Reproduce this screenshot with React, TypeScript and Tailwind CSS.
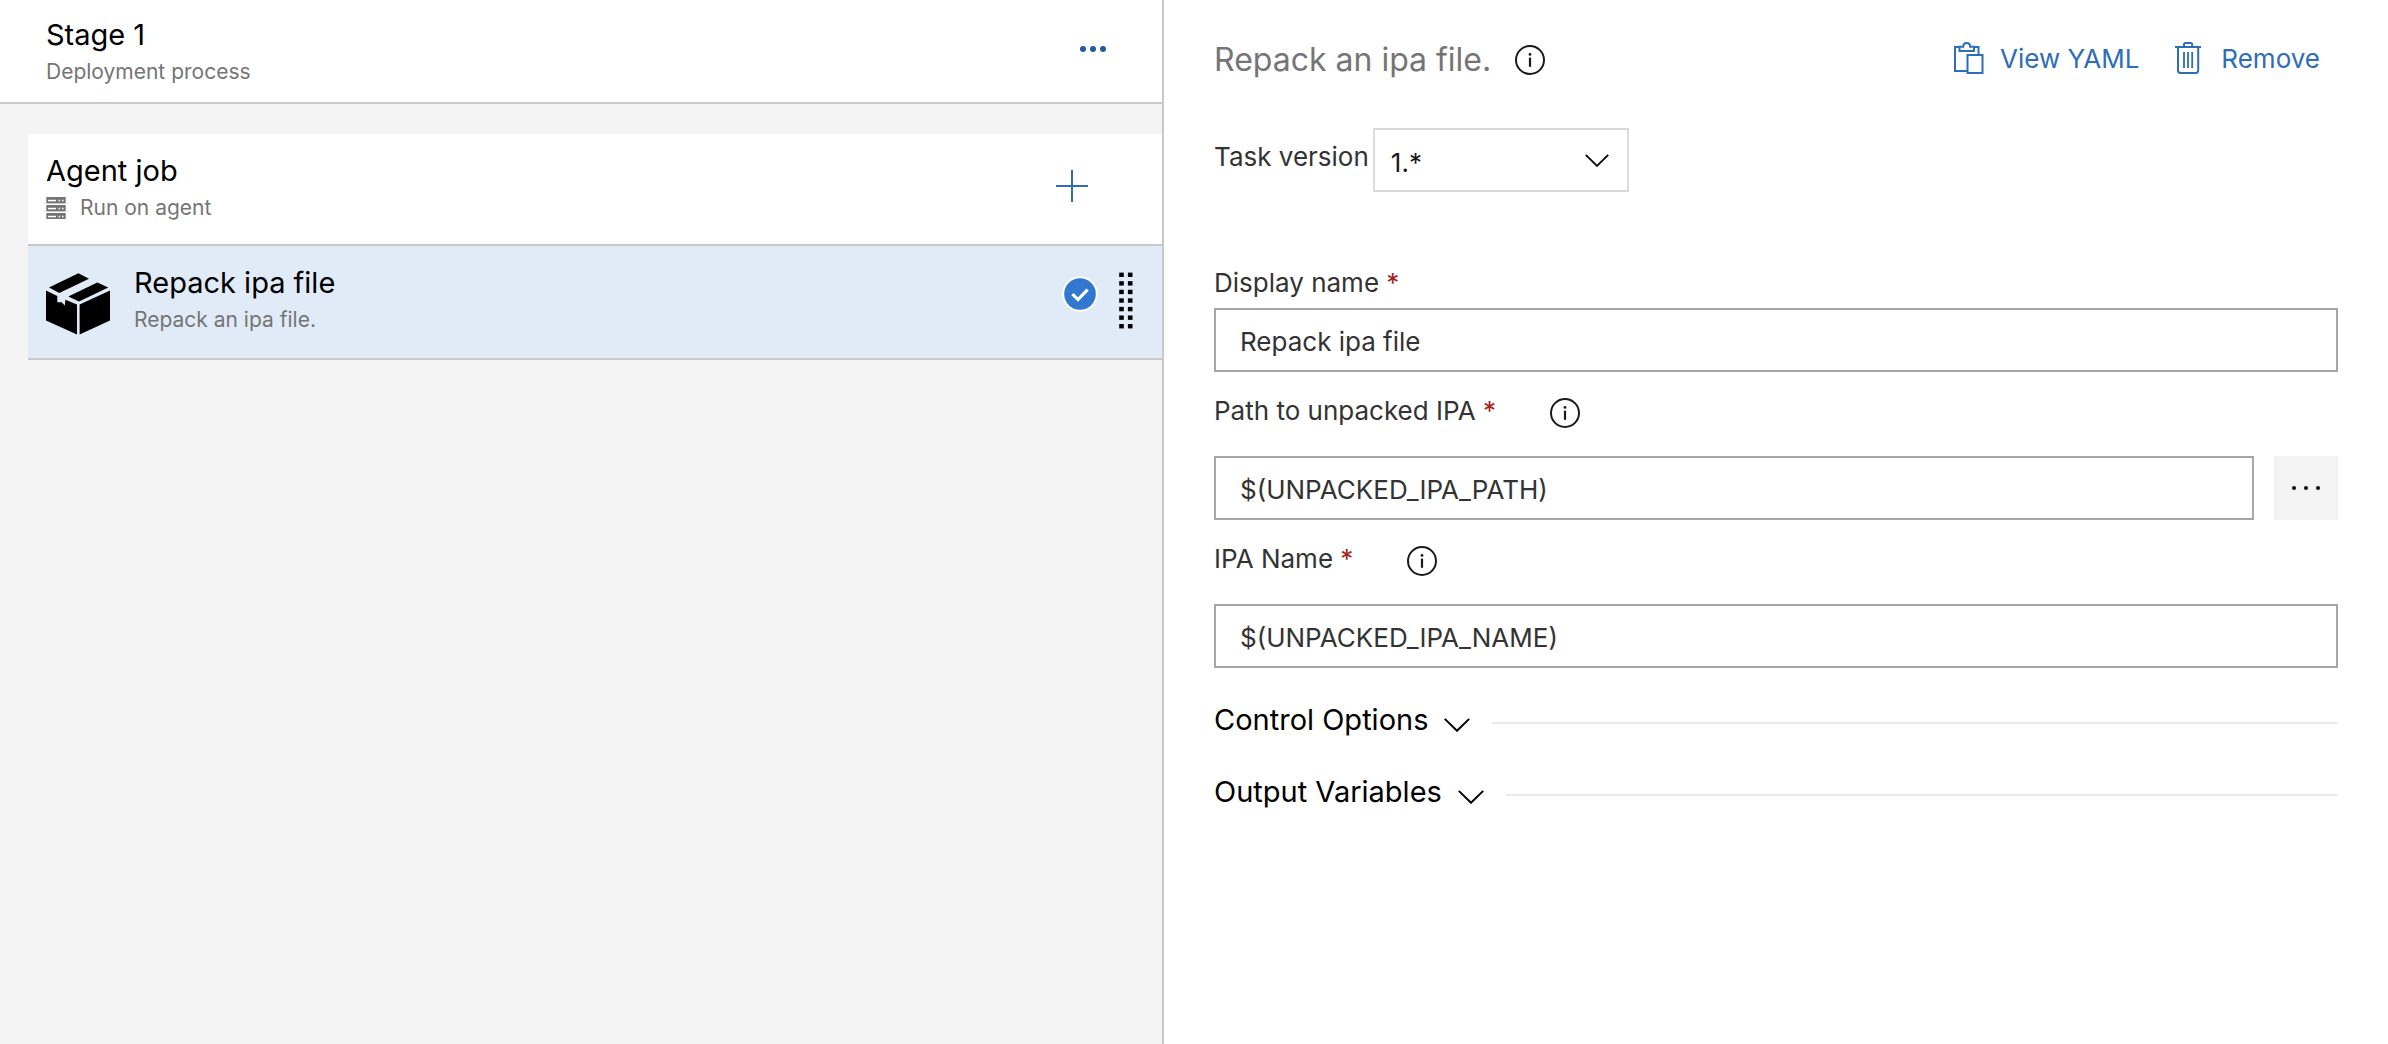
import React, { useState } from "react";

function InfoIcon() {
  return (
    <svg viewBox="0 0 30 30" className="size-[30px] shrink-0" fill="none" aria-hidden="true">
      <circle cx="15" cy="15" r="14" stroke="#1a1a1a" strokeWidth="2" />
      <circle cx="15" cy="9.4" r="1.4" fill="#1a1a1a" />
      <path d="M15 12.6V21.8" stroke="#1a1a1a" strokeWidth="2.2" />
    </svg>
  );
}

function InfoButton({ label }: { label: string }) {
  return (
    <button type="button" aria-label={label} className="flex shrink-0">
      <InfoIcon />
    </button>
  );
}

function ServerIcon() {
  return (
    <svg viewBox="0 0 20 22" className="h-[22px] w-5 shrink-0" aria-hidden="true">
      {[0, 8, 16].map((y) => (
        <g key={y}>
          <rect x="0.3" y={y} width="19.4" height="6.4" fill="#757575" />
          <rect x="2" y={y + 2.8} width="8" height="1.5" fill="#fff" />
          <rect x="12.6" y={y + 2.8} width="1.5" height="1.5" fill="#fff" />
          <rect x="16" y={y + 2.8} width="1.5" height="1.5" fill="#fff" />
        </g>
      ))}
    </svg>
  );
}

function BoxIcon() {
  return (
    <svg viewBox="0 0 64 64" className="size-16 shrink-0" aria-hidden="true">
      <path d="M3 15.4L32.4 1.3L43 6.7L13.3 21Z" />
      <path d="M22.3 24.4L51.3 10.4L62.3 15.4L33 29.6Z" />
      <path d="M0 18.4L11.3 24V30.2H15.6L18.8 33.6L19.4 27.8L31 32.6V62.6L0 48.4Z" />
      <path d="M33.6 32.6L64 18.4V48.4L33.6 62.6Z" />
    </svg>
  );
}

function ClipboardIcon() {
  return (
    <svg viewBox="0 0 30 32" className="h-8 w-[30px] shrink-0" fill="none" stroke="currentColor" strokeWidth="2" aria-hidden="true">
      <path d="M5.5 5H1V29H13.5M19.5 5H24.5V12" />
      <path d="M5.5 4.8V9H20V4.8H16.2C16.2 2.4 14.8 1 12.7 1C10.6 1 9.2 2.4 9.2 4.8Z" />
      <path d="M13.5 13H28.5V31H13.5Z" />
    </svg>
  );
}

function TrashIcon() {
  return (
    <svg viewBox="0 0 26 32" className="h-8 w-[26px] shrink-0" fill="none" stroke="currentColor" strokeWidth="2" aria-hidden="true">
      <path d="M0 5H26M9 5V2.6Q9 1 10.6 1H15.6Q17.2 1 17.2 2.6V5" />
      <path d="M3 5V28.6Q3 31 5.4 31H20.8Q23.2 31 23.2 28.6V5" />
      <path d="M9 10V26M13 10V26M17.2 10V26" strokeWidth="1.8" />
    </svg>
  );
}

function Chevron({ className }: { className: string }) {
  return (
    <svg viewBox="0 0 26 14" className={className} fill="none" stroke="#000" strokeWidth="2" aria-hidden="true">
      <path d="M0.8 0.9L13 12.8L25.2 0.9" />
    </svg>
  );
}

function FieldLabel({ htmlFor, children }: { htmlFor: string; children: React.ReactNode }) {
  return (
    <label htmlFor={htmlFor} className="whitespace-nowrap leading-[34px]">
      {children} <span className="text-[#a3241c]">*</span>
    </label>
  );
}

function TextField({ id, initial }: { id: string; initial: string }) {
  const [value, setValue] = useState(initial);
  return (
    <input
      id={id}
      type="text"
      required
      value={value}
      onChange={(e) => setValue(e.target.value)}
      className="h-16 w-full min-w-0 flex-1 border-2 border-[#a6a6a6] bg-white px-6 pt-0.5 shadow-none outline-none"
    />
  );
}

function Section({ title }: { title: string }) {
  return (
    <div className="flex h-[72px] items-center">
      <button type="button" className="flex items-center gap-4 text-black">
        <span className="text-[29px] leading-9">{title}</span>
        <Chevron className="mt-2.5 h-[14px] w-[26px]" />
      </button>
      <div className="ml-[22px] mt-1.5 h-0.5 flex-1 bg-[#eaeaea]" />
    </div>
  );
}

function StagePane() {
  return (
    <aside className="border-r-2 border-[#c8c8c8] bg-[#f3f3f3]">
      <header className="flex h-[104px] items-start justify-between border-b-2 border-[#c8c8c8] bg-white pl-[46px] pr-14">
        <div className="pt-4">
          <h1 className="text-[29px] leading-[38px] text-black">Stage 1</h1>
          <p className="text-[21px] leading-9 text-[#757575]">Deployment process</p>
        </div>
        <button type="button" aria-label="More actions" className="mt-[46px] flex gap-1">
          <span className="size-1.5 rounded-full bg-[#215a9e]" />
          <span className="size-1.5 rounded-full bg-[#215a9e]" />
          <span className="size-1.5 rounded-full bg-[#215a9e]" />
        </button>
      </header>

      <div className="ml-7 mt-[30px]">
        <div className="flex h-28 items-start justify-between border-b-2 border-[#c8c8c8] bg-white pl-[18px] pr-[74px]">
          <div className="pt-[18px]">
            <h2 className="text-[29px] leading-[38px] text-black">Agent job</h2>
            <p className="flex items-center gap-[14px] text-[21px] leading-9 text-[#757575]">
              <ServerIcon />
              Run on agent
            </p>
          </div>
          <button type="button" aria-label="Add a task to Agent job" className="mt-9">
            <svg viewBox="0 0 32 32" className="size-8" stroke="#2e6db8" strokeWidth="2" aria-hidden="true">
              <path d="M16 0V32M0 16H32" />
            </svg>
          </button>
        </div>

        <div className="flex h-[114px] items-start border-b-2 border-[#c8c8c8] bg-[#e1ebf7] pl-[18px] pr-[29px]">
          <div className="pt-[26px]">
            <BoxIcon />
          </div>
          <div className="ml-6 flex-1 pt-[18px]">
            <h3 className="text-[29px] leading-[38px] text-black">Repack ipa file</h3>
            <p className="text-[21px] leading-9 text-[#757575]">Repack an ipa file.</p>
          </div>
          <svg viewBox="0 0 36 36" className="mt-[30px] size-9" fill="none" aria-hidden="true">
            <circle cx="18" cy="18" r="17.8" fill="#fff" />
            <circle cx="18" cy="18" r="15.8" fill="#3278d1" />
            <path d="M10.4 18.2L16 23.6L25.6 13.6" stroke="#fff" strokeWidth="3.2" />
          </svg>
          <svg viewBox="0 0 14 57" className="ml-[21px] mt-[26px] h-[57px] w-[14px]" aria-hidden="true">
            {[0, 1, 2, 3, 4, 5, 6].map((i) => (
              <g key={i}>
                <rect x="0.2" y={0.6 + i * 8.57} width="4.6" height="4.4" />
                <rect x="8.9" y={0.6 + i * 8.57} width="4.6" height="4.4" />
              </g>
            ))}
          </svg>
        </div>
      </div>
    </aside>
  );
}

function TaskPane() {
  return (
    <main className="bg-white px-[50px] pt-9 text-[26px] text-[#333]">
      <header className="flex items-start justify-between">
        <div className="flex items-center gap-6">
          <h2 className="text-[32px] leading-12 text-[#757575]">Repack an ipa file.</h2>
          <InfoButton label="About this task" />
        </div>
        <div className="flex gap-9 pr-[18px] pt-1.5 leading-[34px] text-[#2e6db8]">
          <button type="button" className="flex items-start gap-4">
            <ClipboardIcon />
            View YAML
          </button>
          <button type="button" className="flex items-start gap-5">
            <TrashIcon />
            Remove
          </button>
        </div>
      </header>

      <div className="mt-11 flex items-start gap-1">
        <label htmlFor="task-version" className="pt-3 leading-[34px]">
          Task version
        </label>
        <div className="relative w-64">
          <select
            id="task-version"
            defaultValue="1"
            className="h-16 w-full appearance-none border-2 border-[#dadada] bg-white px-4 pt-1 text-[#1a1a1a] outline-none"
          >
            <option value="1">1.*</option>
          </select>
          <Chevron className="pointer-events-none absolute right-5 top-[26px] h-[13px] w-6" />
        </div>
      </div>

      <div className="mt-[74px]">
        <div className="flex h-[42px]">
          <FieldLabel htmlFor="display-name">Display name</FieldLabel>
        </div>
        <div className="flex">
          <TextField id="display-name" initial="Repack ipa file" />
        </div>
      </div>

      <div className="mt-[22px]">
        <div className="flex h-[62px] gap-[54px]">
          <FieldLabel htmlFor="ipa-path">Path to unpacked IPA</FieldLabel>
          <div className="pt-1">
            <InfoButton label="About Path to unpacked IPA" />
          </div>
        </div>
        <div className="flex gap-5">
          <TextField id="ipa-path" initial="$(UNPACKED_IPA_PATH)" />
          <button type="button" aria-label="Browse" className="flex size-16 items-center justify-center gap-2 bg-[#f3f3f3]">
            <span className="size-1 rounded-full bg-black" />
            <span className="size-1 rounded-full bg-black" />
            <span className="size-1 rounded-full bg-black" />
          </button>
        </div>
      </div>

      <div className="mt-[22px]">
        <div className="flex h-[62px] gap-[54px]">
          <FieldLabel htmlFor="ipa-name">IPA Name</FieldLabel>
          <div className="pt-1">
            <InfoButton label="About IPA Name" />
          </div>
        </div>
        <div className="flex">
          <TextField id="ipa-name" initial="$(UNPACKED_IPA_NAME)" />
        </div>
      </div>

      <div className="mt-4">
        <Section title="Control Options" />
        <Section title="Output Variables" />
      </div>
    </main>
  );
}

export default function App() {
  return (
    <div className="grid min-h-screen grid-cols-[1164fr_1224fr] font-['Inter',sans-serif]">
      <StagePane />
      <TaskPane />
    </div>
  );
}
